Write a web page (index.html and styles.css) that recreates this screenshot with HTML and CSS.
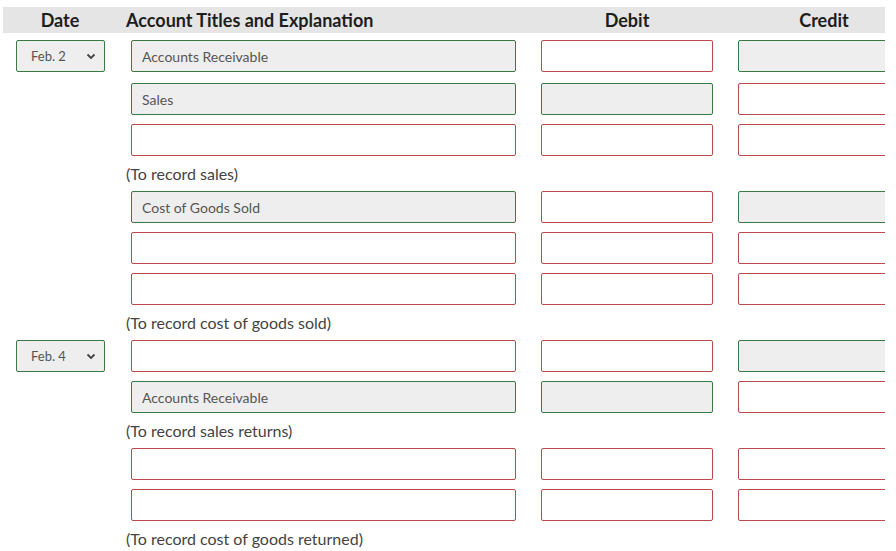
FILE: index.html
```html
<!DOCTYPE html>
<html>
<head>
<meta charset="utf-8">
<link rel="stylesheet" href="styles.css">
</head>
<body>
<div class="sheet">
  <div class="head">
    <div class="h-date">Date</div>
    <div class="h-acct">Account Titles and Explanation</div>
    <div class="h-num">Debit</div>
    <div class="h-num h-credit">Credit</div>
  </div>

  <div class="row first">
    <div class="date"><div class="sel ok"><span>Feb. 2</span><svg class="chev" width="10" height="7" viewBox="0 0 10 7"><path d="M1.5 1.5 L5 5 L8.5 1.5" fill="none" stroke="#444" stroke-width="1.8"/></svg></div></div>
    <div class="fld ok acct">Accounts Receivable</div>
    <div class="fld bad"></div>
    <div class="fld ok"></div>
  </div>
  <div class="row">
    <div></div>
    <div class="fld ok acct">Sales</div>
    <div class="fld ok"></div>
    <div class="fld bad"></div>
  </div>
  <div class="row">
    <div></div>
    <div class="fld bad acct"></div>
    <div class="fld bad"></div>
    <div class="fld bad"></div>
  </div>
  <div class="note">(To record sales)</div>

  <div class="row">
    <div></div>
    <div class="fld ok acct">Cost of Goods Sold</div>
    <div class="fld bad"></div>
    <div class="fld ok"></div>
  </div>
  <div class="row">
    <div></div>
    <div class="fld bad acct"></div>
    <div class="fld bad"></div>
    <div class="fld bad"></div>
  </div>
  <div class="row">
    <div></div>
    <div class="fld bad acct"></div>
    <div class="fld bad"></div>
    <div class="fld bad"></div>
  </div>
  <div class="note">(To record cost of goods sold)</div>

  <div class="row">
    <div class="date"><div class="sel ok"><span>Feb. 4</span><svg class="chev" width="10" height="7" viewBox="0 0 10 7"><path d="M1.5 1.5 L5 5 L8.5 1.5" fill="none" stroke="#444" stroke-width="1.8"/></svg></div></div>
    <div class="fld bad acct"></div>
    <div class="fld bad"></div>
    <div class="fld ok"></div>
  </div>
  <div class="row">
    <div></div>
    <div class="fld ok acct">Accounts Receivable</div>
    <div class="fld ok"></div>
    <div class="fld bad"></div>
  </div>
  <div class="note">(To record sales returns)</div>

  <div class="row">
    <div></div>
    <div class="fld bad acct"></div>
    <div class="fld bad"></div>
    <div class="fld bad"></div>
  </div>
  <div class="row">
    <div></div>
    <div class="fld bad acct"></div>
    <div class="fld bad"></div>
    <div class="fld bad"></div>
  </div>
  <div class="note">(To record cost of goods returned)</div>
</div>
</body>
</html>
```

FILE: styles.css
```css
html, body {
  margin: 0;
  padding: 0;
  background: #fff;
}
body {
  font-family: Lato, "Open Sans", sans-serif;
  color: #333;
}
.sheet {
  margin-left: 3px;
  padding-top: 7px;
  width: 882px;
  overflow: hidden;
}
.head {
  display: grid;
  grid-template-columns: 114px 424px 172px 197px;
  height: 26px;
  background: #e5e5e5;
  align-items: center;
  font-weight: bold;
  font-size: 18px;
  color: #1e1e1e;
  margin-bottom: 7px;
}
.h-date {
  text-align: center;
}
.h-acct {
  padding-left: 9px;
  white-space: nowrap;
}
.h-num {
  text-align: center;
}
.h-credit {
  padding-left: 25px;
}
.row {
  display: grid;
  grid-template-columns: 128px 385px 197px 197px;
  height: 32px;
  margin-bottom: 9px;
}
.row.first {
  margin-bottom: 11px;
}
.row > :nth-child(3),
.row > :nth-child(4) {
  margin-left: 25px;
}
.fld {
  box-sizing: border-box;
  height: 32px;
  width: 172px;
  border: 1px solid;
  border-radius: 2px;
  font-size: 14px;
  color: #555;
  display: flex;
  align-items: center;
  padding-left: 10px;
}
.fld.acct {
  width: 385px;
}
.ok {
  border-color: #3b7a47;
  background: #eeeeee;
}
.bad {
  border-color: #b84a4a;
  background: #fff;
}
.date {
  padding-left: 13px;
}
.sel {
  box-sizing: border-box;
  width: 89px;
  height: 32px;
  border: 1px solid #3b7a47;
  border-radius: 2px;
  display: flex;
  align-items: center;
  justify-content: space-between;
  padding: 0 8px 0 14px;
  font-size: 13px;
  color: #555;
}
.chev {
  display: block;
}
.note {
  height: 17px;
  line-height: 17px;
  margin-bottom: 9px;
  padding-left: 123px;
  font-size: 16px;
  color: #444;
}
```
